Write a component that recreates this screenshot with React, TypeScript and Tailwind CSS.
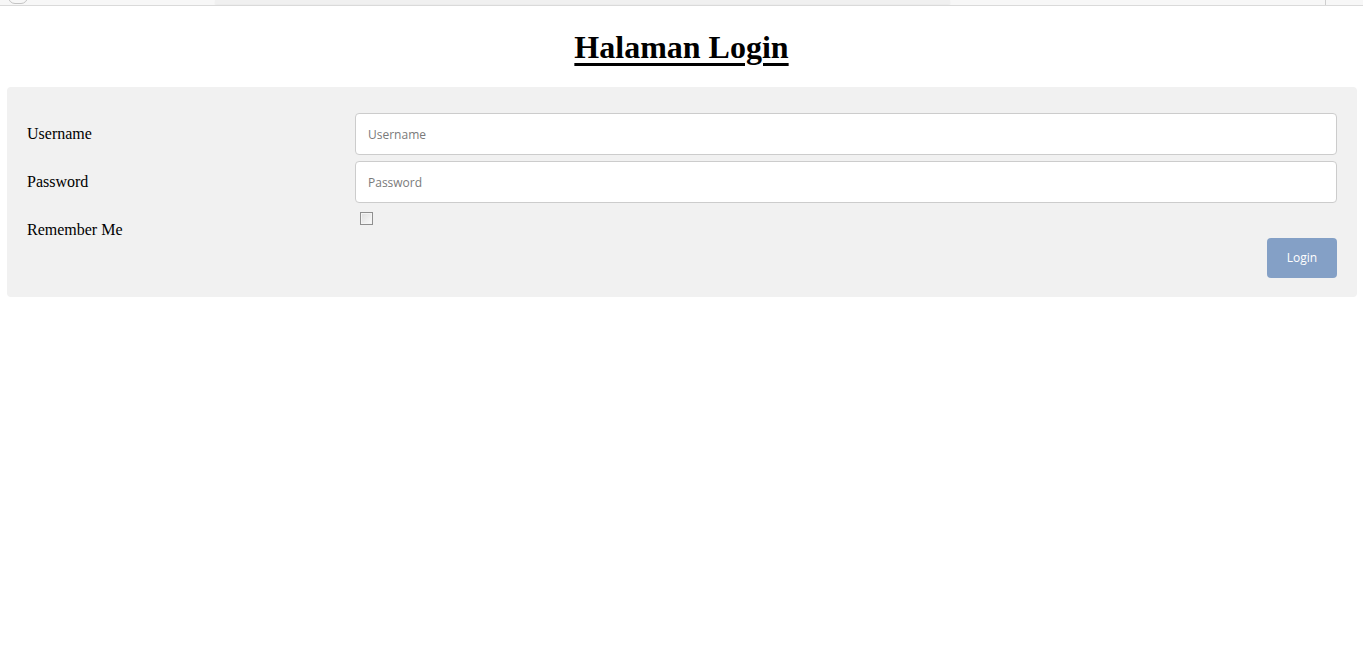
const serif = "font-['Liberation_Serif','Times_New_Roman',serif]";
const sans = "font-['Open_Sans','Noto_Sans',sans-serif]";

const FieldRow = ({ label, type }: { label: string; type: string }) => (
  <div className="grid grid-cols-[328px_1fr] items-center h-[42px]">
    <label className={`${serif} text-[16px] text-black`}>{label}</label>
    <input
      type={type}
      placeholder={label}
      className={`${sans} h-[42px] w-full rounded-[4px] border border-[#cccccc] bg-white px-[12px] text-[12px] text-[#555] placeholder:text-[#7a7a7a] outline-none`}
    />
  </div>
);

export default function App() {
  return (
    <div className="min-h-screen bg-white">
      {/* leftover browser chrome strip */}
      <div className="relative h-[6px] bg-[#f7f7f7] border-b border-[#dadada] overflow-hidden">
        <div className="absolute left-[8px] top-[-10px] h-[14px] w-[20px] rounded-full border border-[#c4c4c4]" />
        <div className="absolute left-[215px] top-0 h-[4px] w-[735px] bg-[#f0f0f0] shadow-[0_1px_2px_rgba(0,0,0,0.06)]" />
        <div className="absolute left-[1325px] top-0 h-[5px] w-px bg-[#cfcfcf]" />
      </div>

      <h1 className={`${serif} mt-[23px] text-center text-[32px] leading-[37px] font-bold underline decoration-[3px] underline-offset-[5px] text-black`}>
        Halaman Login
      </h1>

      <div className="ml-[7px] mr-[6px] mt-[21px] rounded-[4px] bg-[#f1f1f1] pl-[20px] pr-[20px] pt-[26px] pb-[19px]">
        <div className="flex flex-col gap-[6px]">
          <FieldRow label="Username" type="text" />
          <FieldRow label="Password" type="password" />
        </div>

        <div className="grid grid-cols-[328px_1fr]">
          <div className={`${serif} pt-[18px] text-[16px] leading-[18px] text-black`}>Remember Me</div>
          <div className="flex flex-col">
            <span className="mt-[9px] ml-[5px] block h-[13px] w-[13px] border border-[#8f8f8f] bg-linear-to-br from-[#dedede] to-[#fbfbfb] shadow-[inset_0_0_0_1px_#f4f4f4]" />
            <div className="mt-[13px] flex justify-end">
              <button className={`${sans} h-[40px] w-[70px] rounded-[4px] bg-[#84a0c6] text-[12px] text-white`}>
                Login
              </button>
            </div>
          </div>
        </div>
      </div>
    </div>
  );
}
